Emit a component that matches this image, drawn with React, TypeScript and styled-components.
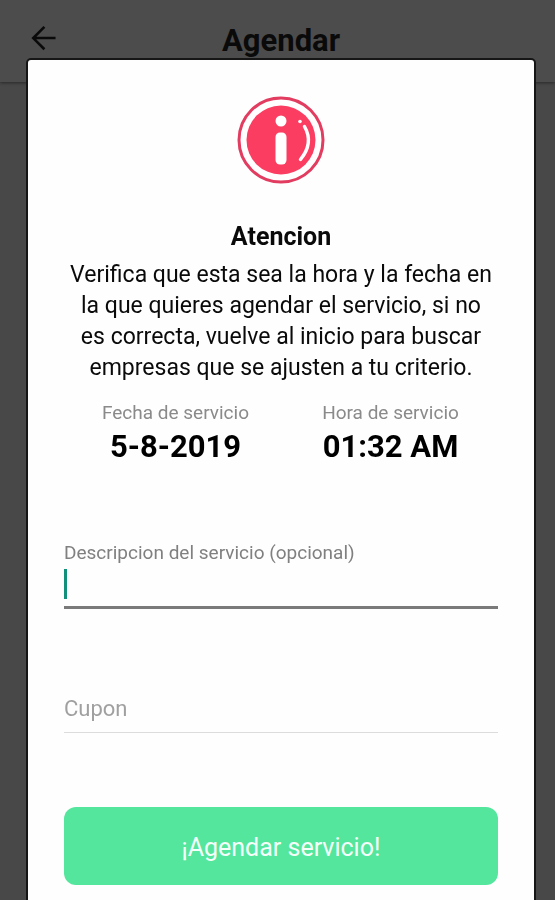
import React, { useState } from "react";
import styled, { createGlobalStyle } from "styled-components";

const GlobalStyle = createGlobalStyle`
  *, *::before, *::after { box-sizing: border-box; }
  body {
    margin: 0;
    background: #484848;
    color: #0a0a0a;
    font-family: Roboto, "Liberation Sans", sans-serif;
  }
  button, input { font: inherit; }
`;

const Page = styled.div`
  min-height: 100vh;
`;

const TopBar = styled.header`
  display: grid;
  grid-template-columns: 48px 1fr 48px;
  align-items: center;
  height: 82px;
  padding: 0 12px 4px 19px;
  background: #4c4c4c;
  box-shadow: 0 1px 3px rgba(0, 0, 0, 0.45);
`;

const BackButton = styled.button`
  display: grid;
  place-items: center;
  width: 48px;
  height: 48px;
  padding: 0;
  border: 0;
  background: none;
  color: #0a0a0a;
`;

const ScreenTitle = styled.h1`
  margin: 0;
  padding-top: 3px;
  font-size: 31px;
  line-height: 32px;
  font-weight: 700;
  text-align: center;
`;

const Overlay = styled.div`
  position: fixed;
  inset: 0;
  padding: 60px 21px 0 28px;
  overflow-y: auto;
  scrollbar-width: none;
`;

const Dialog = styled.section`
  display: flex;
  flex-direction: column;
  padding: 36px;
  border-radius: 3px;
  background: #fefefe;
  box-shadow: 0 0 0 2px #161616;
`;

const Emblem = styled.svg`
  align-self: center;
  width: 88px;
  height: 88px;
`;

const Heading = styled.h2`
  margin: 37px 0 0;
  font-size: 25px;
  line-height: 32px;
  font-weight: 700;
  text-align: center;
`;

const Message = styled.p`
  margin: 6px 0 0;
  padding: 0 4px;
  font-size: 23px;
  line-height: 31px;
  text-align: center;
`;

const Summary = styled.dl`
  display: grid;
  grid-template-columns: 1fr 1fr;
  margin: 18px 0 0;
  padding-left: 4px;
  text-align: center;
`;

const Term = styled.dt`
  color: #8a8a8a;
  font-size: 19px;
  line-height: 24px;
`;

const Detail = styled.dd`
  margin: 4px 0 0;
  color: #000;
  font-size: 31px;
  line-height: 36px;
  font-weight: 700;
`;

const Form = styled.form`
  display: flex;
  flex-direction: column;
  margin-top: 76px;
`;

const Label = styled.label`
  color: #808080;
  font-size: 19px;
  line-height: 24px;
`;

const Field = styled.div<{ $active?: boolean }>`
  display: flex;
  align-items: center;
  height: ${(p) => (p.$active ? 44 : 48)}px;
  padding-bottom: ${(p) => (p.$active ? 4 : 0)}px;
  border-bottom: ${(p) => (p.$active ? "3px solid #7a7a7a" : "1px solid #dcdcdc")};
`;

const Caret = styled.span`
  width: 3px;
  height: 30px;
  background: #11917c;
`;

const TextInput = styled.input`
  flex: 1;
  min-width: 0;
  height: 36px;
  padding: 0;
  border: 0;
  outline: 0;
  background: transparent;
  color: #0a0a0a;
  font-size: 22px;
  &::placeholder { color: #a0a0a0; opacity: 1; }
`;

const CouponRow = styled.div`
  margin-top: 76px;
`;

const SubmitButton = styled.button`
  height: 78px;
  margin-top: 74px;
  padding: 3px 0 0;
  border: 0;
  border-radius: 12px;
  background: #54e69d;
  color: #f4fff9;
  font-size: 25px;
  line-height: 32px;
`;

export default function App() {
  const [description, setDescription] = useState("");
  const [coupon, setCoupon] = useState("");

  return (
    <Page>
      <GlobalStyle />
      <TopBar>
        <BackButton type="button" aria-label="Volver">
          <svg width="26" height="26" viewBox="0 0 28 28" fill="none" stroke="currentColor" strokeWidth="2.8">
            <path d="M27.5 13H4M15.5 1 3.5 13 15.5 25" />
          </svg>
        </BackButton>
        <ScreenTitle>Agendar</ScreenTitle>
      </TopBar>

      <Overlay>
        <Dialog role="dialog" aria-modal="true" aria-labelledby="notice-title">
          <Emblem viewBox="0 0 88 88" aria-hidden="true">
            <circle cx="44" cy="44" r="42" fill="none" stroke="#e23d60" strokeWidth="3" />
            <circle cx="44" cy="44" r="34.5" fill="#fb3d61" />
            <circle cx="44" cy="25" r="5.5" fill="#fff" />
            <rect x="38.5" y="36.5" width="11" height="32" rx="4.5" fill="#fff" />
            <circle cx="63" cy="25.5" r="1.8" fill="#fff" />
            <path d="M67.5 30.5Q77 47 63.5 63.5" fill="none" stroke="#fff" strokeWidth="3.4" strokeLinecap="round" />
          </Emblem>
          <Heading id="notice-title">Atencion</Heading>
          <Message>
            Verifica que esta sea la hora y la fecha en la que quieres agendar el servicio, si no es
            correcta, vuelve al inicio para buscar empresas que se ajusten a tu criterio.
          </Message>
          <Summary>
            <div>
              <Term>Fecha de servicio</Term>
              <Detail>5-8-2019</Detail>
            </div>
            <div>
              <Term>Hora de servicio</Term>
              <Detail>01:32 AM</Detail>
            </div>
          </Summary>
          <Form onSubmit={(e) => e.preventDefault()}>
            <Label htmlFor="description">Descripcion del servicio (opcional)</Label>
            <Field $active>
              {description === "" && <Caret />}
              <TextInput
                id="description"
                value={description}
                onChange={(e) => setDescription(e.target.value)}
              />
            </Field>
            <CouponRow>
              <Field>
                <TextInput
                  aria-label="Cupon"
                  placeholder="Cupon"
                  value={coupon}
                  onChange={(e) => setCoupon(e.target.value)}
                />
              </Field>
            </CouponRow>
            <SubmitButton type="submit">¡Agendar servicio!</SubmitButton>
          </Form>
        </Dialog>
      </Overlay>
    </Page>
  );
}
